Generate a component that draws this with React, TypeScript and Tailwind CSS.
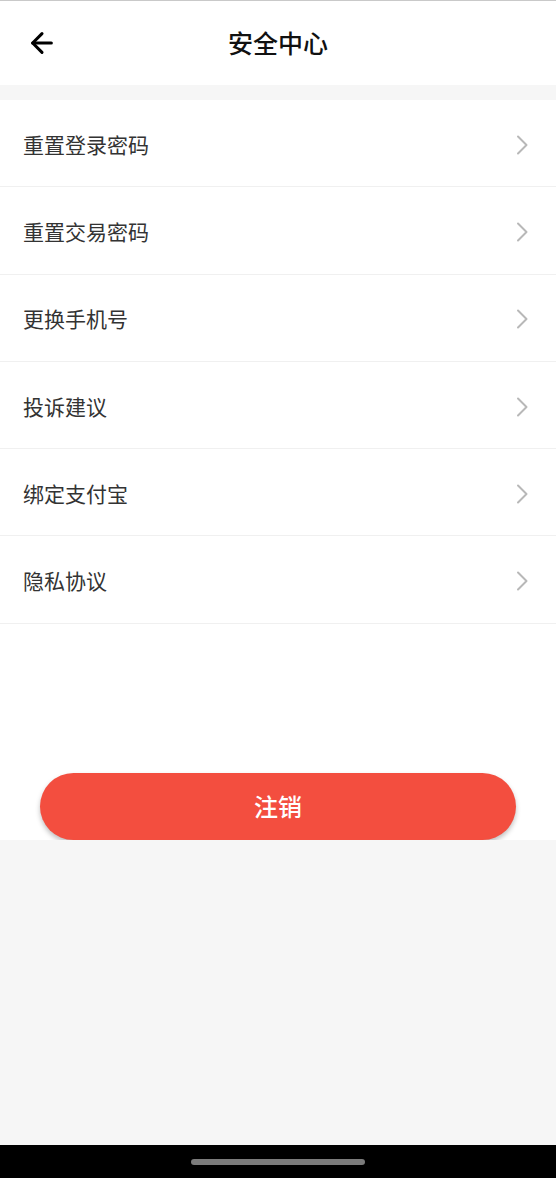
import { ArrowLeft } from "lucide-react";

function Chevron() {
    return (
        <svg width="13" height="20" viewBox="0 0 13 20" fill="none" className="text-[#b8b8b8]">
            <path d="M2 1.5 L10.5 10 L2 18.5" stroke="currentColor" strokeWidth="2" strokeLinecap="round" strokeLinejoin="round" />
        </svg>
    );
}

export default function App() {
    const items = ["重置登录密码", "重置交易密码", "更换手机号", "投诉建议", "绑定支付宝", "隐私协议"];

    return (
        <div
            className="w-[556px] h-[1200px] flex flex-col bg-white"
            style={{ fontFamily: '"Noto Sans CJK SC", "Noto Sans", sans-serif' }}
        >
            <div className="h-px bg-[#c9c9c9]" />

            {/* header */}
            <div className="h-[84px] flex items-center bg-white relative">
                <button className="w-[84px] h-full flex items-center justify-center">
                    <ArrowLeft className="w-[32px] h-[32px] text-black" strokeWidth={2.3} />
                </button>
                <h1 className="absolute left-0 right-0 text-center text-[25px] text-[#111] font-medium pointer-events-none">
                    安全中心
                </h1>
            </div>

            <div className="h-[15px] bg-[#f6f6f6]" />

            {/* list */}
            <div className="bg-white">
                {items.map((item, index) => (
                    <div
                        key={index}
                        className="h-[87.3px] flex items-center justify-between pl-[23px] pr-[27px] pt-[3px] border-b border-[#f0f0f0]"
                    >
                        <span className="text-[21px] text-[#333]">{item}</span>
                        <Chevron />
                    </div>
                ))}
            </div>

            <div className="bg-white pt-[149px] px-[40px]">
                <button className="w-full h-[67px] rounded-full bg-[#f34e3f] text-white text-[24px] font-medium shadow-[0_3px_5px_rgba(0,0,0,0.25)]">
                    注销
                </button>
            </div>

            <div className="flex-1 bg-[#f6f6f6]" />

            <div className="h-[33px] bg-black flex items-center justify-center">
                <div className="w-[174px] h-[6px] rounded-full bg-[#7b7b7b]" />
            </div>
            <div className="h-[22px] bg-white" />
        </div>
    );
}
